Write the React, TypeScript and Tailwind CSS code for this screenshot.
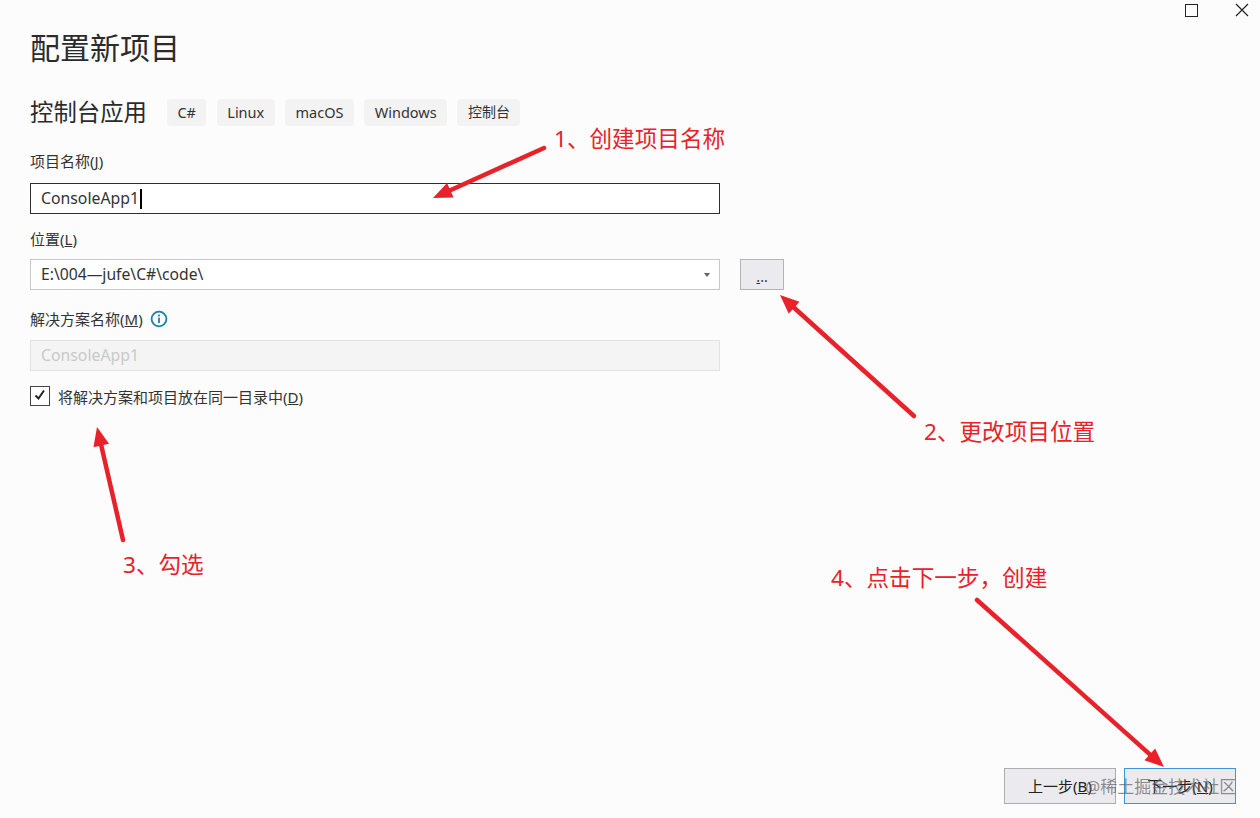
const font = "font-['Noto_Sans','Noto_Sans_CJK_SC',sans-serif]";

function Tag({ children }: { children: React.ReactNode }) {
  return (
    <span className="flex h-[27px] items-center rounded-[4px] bg-[#f3f3f3] px-[10.5px] text-[14.5px] leading-none text-[#333333]">
      {children}
    </span>
  );
}

function Label({ text, hot }: { text: string; hot: string }) {
  return (
    <span className="block text-[15px] leading-[20px] text-[#333333]">
      {text}(<span className="underline">{hot}</span>)
    </span>
  );
}

function Note({ text, className }: { text: string; className: string }) {
  return <div className={`absolute whitespace-nowrap text-[22.6px] leading-[30px] text-[#e8222b] ${className}`}>{text}</div>;
}

function Arrow({ x1, y1, x2, y2 }: { x1: number; y1: number; x2: number; y2: number }) {
  const a = Math.atan2(y2 - y1, x2 - x1);
  const L = 19;
  const W = 8;
  const bx = x2 - L * Math.cos(a);
  const by = y2 - L * Math.sin(a);
  const nx = -Math.sin(a) * W;
  const ny = Math.cos(a) * W;
  return (
    <g>
      <line x1={x1} y1={y1} x2={bx} y2={by} stroke="#e8222b" strokeWidth="4.5" strokeLinecap="round" />
      <polygon points={`${x2},${y2} ${bx + nx},${by + ny} ${bx - nx},${by - ny}`} fill="#e8222b" />
    </g>
  );
}

export default function App() {
  return (
    <div className={`relative flex h-[818px] w-[1260px] flex-col overflow-hidden bg-[#fcfcfc] pl-[30px] pr-[24px] ${font}`}>
      <div className="absolute right-0 top-0 flex items-start">
        <div className="mr-[37px] mt-[4px] h-[13px] w-[13px] border-[1.5px] border-[#222222]" />
        <svg width="14" height="14" viewBox="0 0 14 14" className="mr-[11px] mt-[3px]">
          <path d="M1 1 L13 13 M13 1 L1 13" stroke="#222222" strokeWidth="1.2" fill="none" />
        </svg>
      </div>

      <h1 className="mt-[26px] text-[30px] font-normal leading-[44px] text-[#2b2b2b]">配置新项目</h1>

      <div className="mt-[26px] flex items-center">
        <span className="text-[23.4px] leading-[32px] text-[#2b2b2b]">控制台应用</span>
        <div className="ml-[20px] flex gap-[10.3px]">
          <Tag>C#</Tag>
          <Tag>Linux</Tag>
          <Tag>macOS</Tag>
          <Tag>Windows</Tag>
          <Tag><span className="text-[14px]">控制台</span></Tag>
        </div>
      </div>

      <div className="mt-[23px] w-[690px]">
        <Label text="项目名称" hot="J" />
        <div className="mt-[12px] flex h-[31px] items-center border border-[#2f2f2f] bg-white pl-[10px] text-[15.8px] text-[#333333]">
          ConsoleApp1<span className="ml-[1px] h-[20px] w-[2px] bg-black" />
        </div>
      </div>

      <div className="mt-[15px] flex items-start gap-[20px]">
        <div className="w-[690px]">
          <Label text="位置" hot="L" />
          <div className="mt-[10px] flex h-[31px] items-center justify-between border border-[#c8c8c8] bg-white pl-[10px] pr-[9px] text-[15.7px] text-[#333333]">
            <span>E:\004—jufe\C#\code\</span>
            <span className="h-0 w-0 border-x-[3.5px] border-t-[4px] border-x-transparent border-t-[#666666]" />
          </div>
        </div>
        <div className="mt-[30px] flex h-[31px] w-[44px] items-end justify-center border border-[#b5b5b5] bg-[#ebebef] pb-[2px] text-[14px] leading-[20px] text-[#333333]">
          <span><span className="underline">.</span>..</span>
        </div>
      </div>

      <div className="mt-[19px] w-[690px]">
        <div className="flex items-center gap-[7px]">
          <Label text="解决方案名称" hot="M" />
          <svg width="18" height="18" viewBox="0 0 18 18">
            <circle cx="9" cy="9" r="7.4" fill="none" stroke="#1a81a8" strokeWidth="1.8" />
            <rect x="8.1" y="7.6" width="1.8" height="5.4" fill="#1a81a8" />
            <rect x="8.1" y="4.6" width="1.8" height="1.8" fill="#1a81a8" />
          </svg>
        </div>
        <div className="mt-[11px] flex h-[31px] items-center border border-[#e2e2e2] bg-[#f4f4f4] pl-[10px] text-[15.8px] text-[#c9c9c9]">
          ConsoleApp1
        </div>
      </div>

      <div className="mt-[14px] flex items-center gap-[8px]">
        <div className="flex h-[20px] w-[20px] items-center justify-center border border-[#444444] bg-white">
          <svg width="14" height="14" viewBox="0 0 14 14">
            <path d="M2.5 6.5 L5.5 9.5 L11 1.5" stroke="#222222" strokeWidth="2" fill="none" />
          </svg>
        </div>
        <div className="mt-[2px]">
          <Label text="将解决方案和项目放在同一目录中" hot="D" />
        </div>
      </div>

      <div className="mt-auto mb-[14px] flex justify-end gap-[8px]">
        <div className="flex h-[36px] w-[112px] items-center justify-center border border-[#adadad] bg-[#ebebef] text-[15px] text-[#222222]">
          上一步(<span className="underline">B</span>)
        </div>
        <div className="flex h-[36px] w-[112px] items-center justify-center border border-[#3c96dc] bg-[#ebebef] text-[15px] text-[#222222]">
          下一步(<span className="underline">N</span>)
        </div>
      </div>

      <svg width="1260" height="818" viewBox="0 0 1260 818" className="pointer-events-none absolute left-0 top-0">
        <Arrow x1={544} y1={148} x2={433} y2={198} />
        <Arrow x1={914} y1={416} x2={780} y2={295} />
        <Arrow x1={123} y1={540} x2={97} y2={427} />
        <Arrow x1={977} y1={600} x2={1164} y2={767} />
      </svg>
      <Note text="1、创建项目名称" className="left-[554px] top-[124px]" />
      <Note text="2、更改项目位置" className="left-[924px] top-[417px]" />
      <Note text="3、勾选" className="left-[123px] top-[550px]" />
      <Note text="4、点击下一步，创建" className="left-[831px] top-[563px]" />
      <div className="absolute left-[1085px] top-[774px] whitespace-nowrap text-[17px] leading-[26px] text-[#5f5f5f]/70">@稀土掘金技术社区</div>
    </div>
  );
}
